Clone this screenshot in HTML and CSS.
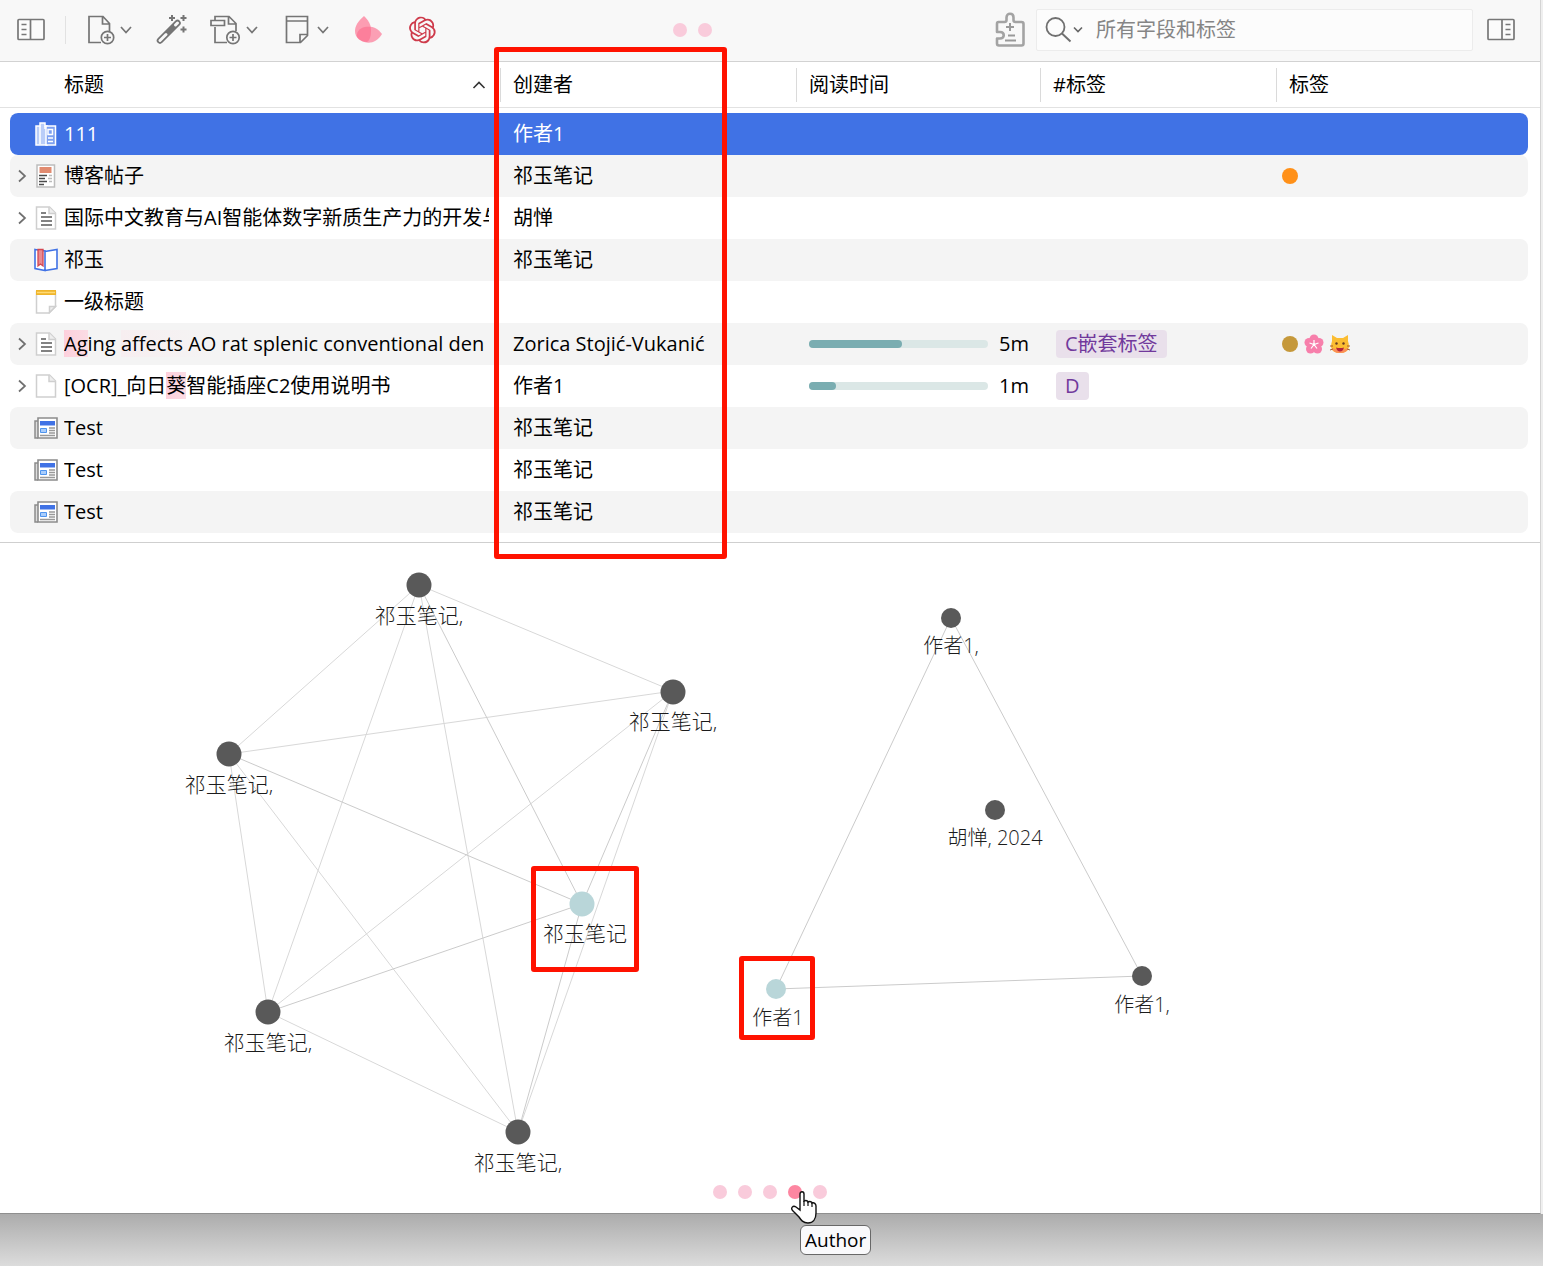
FILE: index.html
```html
<!DOCTYPE html>
<html lang="zh-CN">
<head>
<meta charset="utf-8">
<title>文献库</title>
<link rel="stylesheet" href="styles.css">
</head>
<body>
<svg class="defs" aria-hidden="true">
  <symbol id="chevron" viewBox="0 0 16 30"><path d="M3 12l5 5.500l5-5.500" fill="none" stroke="#757575" stroke-width="1.700"/></symbol>
  <symbol id="twisty" viewBox="0 0 12 16"><path d="M3 2.500l6 5.500l-6 5.500" fill="none" stroke="#707070" stroke-width="1.700"/></symbol>
  <symbol id="article" viewBox="0 0 24 24"><path d="M2.500 1h13l6 6v16h-19z" fill="#fff" stroke="#cfcfcf" stroke-width="1.500"/><path d="M15 1v6.500h6.500" fill="#eee" stroke="#cfcfcf" stroke-width="1.500"/><path d="M7 7h5M7 11h11M7 15h11M7 19h11" stroke="#5a5a5a" stroke-width="1.700"/></symbol>
  <symbol id="file" viewBox="0 0 24 24"><path d="M2.500 1h13l6 6v16h-19z" fill="#fff" stroke="#cfcfcf" stroke-width="1.500"/><path d="M15 1v6.500h6.500" fill="#eee" stroke="#cfcfcf" stroke-width="1.500"/></symbol>
  <symbol id="news" viewBox="0 0 24 24"><path d="M4 5H1v17h3" fill="#ddd" stroke="#8c8c8c" stroke-width="1.500"/><path d="M4 2h19v20H4z" fill="#fff" stroke="#8c8c8c" stroke-width="1.600"/><path d="M6 5h15v4.500H6z" fill="#4072e5"/><path d="M6.500 12.500h6v4h-6z" fill="#a9cdfb" stroke="#4f94ee"/><path d="M15 12h6M15 14.500h6M15 17h6M6 19.500h15" stroke="#999" stroke-width="1.300"/></symbol>
</svg>

<main class="app">
  <header class="toolbar">
    <div class="tools">
      <button class="tool" aria-label="侧栏"><svg width="34" height="30"><rect x="4" y="4.500" width="26" height="20" rx="1" fill="#fbfbfb" stroke="#777" stroke-width="1.700"/><path d="M16.500 4.500v20M7.500 9.500h5M7.500 14.500h5M7.500 19.500h5" stroke="#777" stroke-width="1.700"/></svg></button>
      <span class="separator"></span>
      <button class="tool" aria-label="新建条目"><svg width="34" height="30"><path d="M17 27.500H5V1.500h14l6.500 7V16M18.500 2v7h7" fill="none" stroke="#757575" stroke-width="1.700"/><circle cx="23.500" cy="22.500" r="6.200" fill="#f8f8f8" stroke="#757575" stroke-width="1.700"/><path d="M23.500 19v7M20 22.500h7" stroke="#757575" stroke-width="1.700"/></svg><svg width="16" height="30"><use href="#chevron"/></svg></button>
      <button class="tool" aria-label="通过标识符添加"><svg width="34" height="30"><path d="M5 25.500L22.500 8" stroke="#757575" stroke-width="6.500" stroke-linecap="round"/><path d="M5 25.500L11 19.500M20.500 10l2-2" stroke="#f8f8f8" stroke-width="3" stroke-linecap="round"/><path d="M17 0v6M14 3h6M28.500 0v6M25.500 3h6M28.500 11.500v6M25.500 14.500h6" stroke="#757575" stroke-width="2"/></svg></button>
      <button class="tool" aria-label="添加附件"><svg width="34" height="30"><path d="M5 12v15.500h12M5 5V1.500h14l7 7V16M18.500 2v7h7" fill="none" stroke="#757575" stroke-width="1.700"/><path d="M1 5.500h13.500v5H1z" fill="#f8f8f8" stroke="#757575" stroke-width="1.700"/><circle cx="23" cy="22.500" r="6.200" fill="#f8f8f8" stroke="#757575" stroke-width="1.700"/><path d="M23 19v7M19.500 22.500h7" stroke="#757575" stroke-width="1.700"/></svg><svg width="16" height="30"><use href="#chevron"/></svg></button>
      <button class="tool" aria-label="新建笔记"><svg width="34" height="30"><path d="M5.500 1.500h21v19l-7 7h-14zM5.500 6h21M26.500 19.500h-7.500v8" fill="none" stroke="#757575" stroke-width="1.700"/></svg><svg width="16" height="30"><use href="#chevron"/></svg></button>
      <button class="tool" aria-label="样式"><svg width="34" height="30"><path d="M12 1C6 6 3 11 3 16c0 7 6 11 12 11c3-2 4-6 4-12c0-6-3-10-7-14z" fill="#fc9db2"/><path d="M30 19c-5-7-11-8-17-7c-6 1-9 6-8 10c6 8 19 8 25-3z" fill="#fc6f8f" fill-opacity=".65"/></svg></button>
      <button class="tool" aria-label="GPT"><svg width="34" height="30" viewBox="-1.500 -1.500 30 27"><path fill="#ce3b4b" d="M22.2819 9.8211a5.9847 5.9847 0 0 0-.5157-4.9108 6.0462 6.0462 0 0 0-6.5098-2.9A6.0651 6.0651 0 0 0 4.9807 4.1818a5.9847 5.9847 0 0 0-3.9977 2.9 6.0462 6.0462 0 0 0 .7427 7.0966 5.98 5.98 0 0 0 .511 4.9107 6.051 6.051 0 0 0 6.5146 2.9001A5.9847 5.9847 0 0 0 13.2599 24a6.0557 6.0557 0 0 0 5.7718-4.2058 5.9894 5.9894 0 0 0 3.9977-2.9001 6.0557 6.0557 0 0 0-.7475-7.0729zm-9.022 12.6081a4.4755 4.4755 0 0 1-2.8764-1.0408l.1419-.0804 4.7783-2.7582a.7948.7948 0 0 0 .3927-.6813v-6.7369l2.02 1.1686a.071.071 0 0 1 .038.052v5.5826a4.504 4.504 0 0 1-4.4945 4.4944zm-9.6607-4.1254a4.4708 4.4708 0 0 1-.5346-3.0137l.142.0852 4.783 2.7582a.7712.7712 0 0 0 .7806 0l5.8428-3.3685v2.3324a.0804.0804 0 0 1-.0332.0615L9.74 19.9502a4.4992 4.4992 0 0 1-6.1408-1.6464zM2.3408 7.8956a4.485 4.485 0 0 1 2.3655-1.9728V11.6a.7664.7664 0 0 0 .3879.6765l5.8144 3.3543-2.0201 1.1685a.0757.0757 0 0 1-.071 0l-4.8303-2.7865A4.504 4.504 0 0 1 2.3408 7.872zm16.5963 3.8558L13.1038 8.364 15.1192 7.2a.0757.0757 0 0 1 .071 0l4.8303 2.7913a4.4944 4.4944 0 0 1-.6765 8.1042v-5.6772a.79.79 0 0 0-.407-.667zm2.0107-3.0231l-.142-.0852-4.7735-2.7818a.7759.7759 0 0 0-.7854 0L9.409 9.2297V6.8974a.0662.0662 0 0 1 .0284-.0615l4.8303-2.7866a4.4992 4.4992 0 0 1 6.6802 4.66zM8.3065 12.863l-2.02-1.1638a.0804.0804 0 0 1-.038-.0567V6.0742a4.4992 4.4992 0 0 1 7.3757-3.4537l-.142.0805L8.704 5.459a.7948.7948 0 0 0-.3927.6813zm1.0976-2.3654l2.602-1.4998 2.6069 1.4998v2.9994l-2.5974 1.4997-2.6067-1.4997Z"/></svg></button>
    </div>
    <div class="dots">
      <button class="dot" aria-label="视图 1"></button>
      <button class="dot" aria-label="视图 2"></button>
    </div>
    <div class="search-area">
      <button class="tool" aria-label="插件"><svg width="34" height="36"><path d="M7 10.500h6q2 0 2-2V6c0-5 7-5 7 0v2.500q0 2 2 2h6q2 0 2 2V32q0 2-2 2H7.500q-2 0-2-2v-5h3c5 0 5-6.500 0-6.500h-3v-8q0-2 1.500-2z" transform="translate(.5 -.5)" fill="#f8f8f8" stroke="#a3a3a3" stroke-width="2.600" stroke-linejoin="round"/><path d="M19 11v8M15 15h8M17 23.500h7M14 28.500h11" stroke="#999" stroke-width="2"/></svg></button>
      <label class="search">
        <svg width="40" height="30"><circle cx="10.500" cy="12" r="9" fill="none" stroke="#707070" stroke-width="1.800"/><path d="M17 18.500l8.500 8" stroke="#707070" stroke-width="1.900"/><path d="M29 12.500l4 4l4-4" fill="none" stroke="#666" stroke-width="1.600"/></svg>
        <input type="text" placeholder="所有字段和标签" aria-label="搜索">
      </label>
      <button class="tool" aria-label="条目面板"><svg width="34" height="30"><rect x="4" y="4.500" width="26" height="20" rx="1" fill="#fbfbfb" stroke="#777" stroke-width="1.700"/><path d="M18 4.500v20M21.500 9.500h5M21.500 14.500h5M21.500 19.500h5" stroke="#777" stroke-width="1.700"/></svg></button>
    </div>
  </header>

  <section class="items">
    <table>
      <colgroup><col class="col-title"><col class="col-creator"><col class="col-time"><col class="col-hashtag"><col></colgroup>
      <thead>
        <tr>
          <th><div class="head head-title">标题<svg width="14" height="10"><path d="M1.500 8l5.500-5.500l5.500 5.500" fill="none" stroke="#333" stroke-width="1.600"/></svg></div></th>
          <th><div class="head">创建者</div></th>
          <th><div class="head">阅读时间</div></th>
          <th><div class="head">#标签</div></th>
          <th><div class="head">标签</div></th>
        </tr>
      </thead>
      <tbody>
        <tr class="selected">
          <td><div class="title"><span class="twisty"></span><svg class="icon" viewBox="0 0 24 24"><path d="M2 4h4V1h5v3h2v19H2z" fill="#b9cdf8" stroke="#fff" stroke-width="1.500"/><path d="M6 4v18M11 4v3" stroke="#fff" stroke-width="1.500"/><path d="M12 4h9.500v19H12z" fill="#7da0f0" stroke="#fff" stroke-width="1.500"/><path d="M14 7.500h4.500v5H14zM14 16h5M14 19.500h5" fill="none" stroke="#fff" stroke-width="1.500"/></svg><span class="name">111</span></div></td>
          <td>作者1</td><td></td><td></td><td></td>
        </tr>
        <tr>
          <td><div class="title"><svg class="twisty"><use href="#twisty"/></svg><svg class="icon" viewBox="0 0 24 24"><path d="M3 1h17.500v22H3z" fill="#fff" stroke="#bdbdbd" stroke-width="1.500"/><path d="M5.500 3h12v6h-12z" fill="#e18b70"/><path d="M5 11.500h8M5 14.500h6M5 17.500h8M5 20.500h5" stroke="#4b4b4b" stroke-width="1.500"/><path d="M15 11.500h3M14 14.500h4M15 17.500h3" stroke="#bbb" stroke-width="1.500"/></svg><span class="name">博客帖子</span></div></td>
          <td>祁玉笔记</td><td></td><td></td>
          <td><div class="marks"><span class="mark-dot orange"></span></div></td>
        </tr>
        <tr>
          <td><div class="title"><svg class="twisty"><use href="#twisty"/></svg><svg class="icon"><use href="#article"/></svg><span class="name">国际中文教育与AI智能体数字新质生产力的开发与</span></div></td>
          <td>胡惮</td><td></td><td></td><td></td>
        </tr>
        <tr>
          <td><div class="title"><span class="twisty"></span><svg class="icon" viewBox="0 0 24 24"><path d="M1 1.500l10 1.500v19.500L1 20.500zM11 3.500l12-2v19l-12 2" fill="#fff" stroke="#4072e5" stroke-width="1.600"/><path d="M4 1.500h5V18l-2.500-2l-2.500 2z" fill="#e88b93" stroke="#d4454f" stroke-width="1.300"/></svg><span class="name">祁玉</span></div></td>
          <td>祁玉笔记</td><td></td><td></td><td></td>
        </tr>
        <tr>
          <td><div class="title"><span class="twisty"></span><svg class="icon" viewBox="0 0 24 24"><path d="M2.500 2h19v14.500l-6.500 6.500H2.500z" fill="#fff" stroke="#cfcfcf" stroke-width="1.500"/><path d="M21.500 16.500h-6v6z" fill="#eee" stroke="#cfcfcf" stroke-width="1.500"/><path d="M2 0h20v5H2z" fill="#efb52c"/><path d="M3 2.500h18" stroke="#ffda74" stroke-width="1.500"/></svg><span class="name">一级标题</span></div></td>
          <td></td><td></td><td></td><td></td>
        </tr>
        <tr>
          <td><div class="title"><svg class="twisty"><use href="#twisty"/></svg><svg class="icon"><use href="#article"/></svg><span class="name"><span class="pink">Ag</span>ing <span class="faint">affects AO</span> rat splenic conventional den</span></div></td>
          <td>Zorica Stojić-Vukanić</td>
          <td><div class="reading"><div class="bar"><div class="fill" style="width:52%"></div></div><span>5m</span></div></td>
          <td><span class="tag">C嵌套标签</span></td>
          <td><div class="marks"><span class="mark-dot ochre"></span>
            <svg width="20" height="20"><g fill="#f77fab"><circle cx="10" cy="5" r="4.500"/><circle cx="15" cy="8.500" r="4.500"/><circle cx="13.500" cy="15" r="4.500"/><circle cx="6.500" cy="15" r="4.500"/><circle cx="5" cy="8.500" r="4.500"/><circle cx="10" cy="11" r="5"/></g><path d="M10 10.500V6M10 10.500l4.500-1.500M10 10.500l3 4M10 10.500l-3 4M10 10.500L5.500 9" stroke="#fff" stroke-width="1.200"/><circle cx="10" cy="10.500" r="1.300" fill="#fff"/></svg>
            <svg width="20" height="20"><path d="M2 1l5 3h6l5-3v6q1 3 1 6q-1 6-9 6t-9-6q0-3 1-6z" fill="#fbbd32"/><path d="M2 14q8 3 16 0q-1 5-8 5t-8-5z" fill="#fb8d59"/><circle cx="6.500" cy="9.500" r="1.200" fill="#673b25"/><circle cx="13.500" cy="9.500" r="1.200" fill="#673b25"/><path d="M6 13.500q4 1 8 0q-1 4-4 4t-4-4z" fill="#b3243b"/><path d="M0 12h3M0 16l3-1M20 12h-3M20 16l-3-1" stroke="#a75d37"/></svg></div></td>
        </tr>
        <tr>
          <td><div class="title"><svg class="twisty"><use href="#twisty"/></svg><svg class="icon"><use href="#file"/></svg><span class="name">[OCR]_向日<span class="pink">葵</span>智能插座C2使用说明书</span></div></td>
          <td>作者1</td>
          <td><div class="reading"><div class="bar"><div class="fill" style="width:15%"></div></div><span>1m</span></div></td>
          <td><span class="tag">D</span></td><td></td>
        </tr>
        <tr><td><div class="title"><span class="twisty"></span><svg class="icon"><use href="#news"/></svg><span class="name">Test</span></div></td><td>祁玉笔记</td><td></td><td></td><td></td></tr>
        <tr><td><div class="title"><span class="twisty"></span><svg class="icon"><use href="#news"/></svg><span class="name">Test</span></div></td><td>祁玉笔记</td><td></td><td></td><td></td></tr>
        <tr><td><div class="title"><span class="twisty"></span><svg class="icon"><use href="#news"/></svg><span class="name">Test</span></div></td><td>祁玉笔记</td><td></td><td></td><td></td></tr>
      </tbody>
    </table>
    <div class="callout callout-column"></div>
  </section>

  <section class="graph">
    <svg class="network" role="img" aria-label="作者关系图">
      <g class="edges">
        <path d="M419 42L673 148M419 42L229 211M419 42L268 469M419 42L518 589M673 148L229 211M673 148L268 469M673 148L518 589M229 211L268 469M229 211L518 589M268 469L518 589"/>
        <path class="near" d="M419 42L582 361M673 148L582 361M229 211L582 361M268 469L582 361M518 589L582 361"/>
        <path class="near" d="M951 75L776 446M951 75L1142 433M776 446L1142 433"/>
      </g>
      <g class="nodes">
        <circle cx="419" cy="42" r="12.500"/><circle cx="673" cy="149" r="12.500"/><circle cx="229" cy="211" r="12.500"/>
        <circle cx="268" cy="469" r="12.500"/><circle cx="518" cy="589" r="12.500"/><circle class="current" cx="582" cy="361" r="12.500"/>
        <circle cx="951" cy="75" r="10"/><circle cx="995" cy="267" r="10"/><circle cx="1142" cy="433" r="10"/><circle class="current" cx="776" cy="446" r="10"/>
      </g>
      <g class="labels large">
        <text x="419" y="80">祁玉笔记,</text><text x="673" y="186">祁玉笔记,</text><text x="229" y="249">祁玉笔记,</text>
        <text x="268" y="507">祁玉笔记,</text><text x="518" y="627">祁玉笔记,</text><text x="585" y="398">祁玉笔记</text>
      </g>
      <g class="labels">
        <text x="951" y="110">作者1,</text><text x="995" y="302">胡惮, 2024</text><text x="1142" y="469">作者1,</text><text x="778" y="482">作者1</text>
      </g>
    </svg>
    <div class="callout callout-first"></div>
    <div class="callout callout-second"></div>
    <div class="dots pager">
      <button class="dot" aria-label="1"></button><button class="dot" aria-label="2"></button><button class="dot" aria-label="3"></button>
      <button class="dot active" aria-label="Author" aria-describedby="tip">
        <svg class="pointer" width="28" height="34"><path d="M10 3c0-3 4-3 4 0v7c2-1 4 0 4 1c2-1 4 0 4 1c2-1 4 1 4 3v7c0 6-3 10-8 10c-5 0-7-3-9-6l-6-6c-3-3 0-6 3-4l4 3z" fill="#fff" stroke="#111" stroke-width="1.400"/><path d="M14 10v5M18 11v4M22 12v4" stroke="#111" stroke-width="1.200"/></svg>
        <span class="tooltip" id="tip" role="tooltip">Author</span>
      </button>
      <button class="dot" aria-label="5"></button>
    </div>
  </section>
</main>
</body>
</html>
```
FILE: styles.css
```css
* { box-sizing: border-box; }

body {
  margin: 0;
  min-height: 100vh;
  display: flex;
  flex-direction: column;
  padding: 0 2px 52px 0;
  background: linear-gradient(#acacac, #dcdcdc) bottom / 100% 52px no-repeat #efefef;
  font-family: "Open Sans", "Noto Sans CJK SC", sans-serif;
  font-size: 20px;
  line-height: 28px;
  color: #000;
}

button { border: 0; padding: 0; background: none; font: inherit; color: inherit; }
svg { display: block; flex: none; }
.defs { position: absolute; width: 0; height: 0; }

.app {
  flex: 1;
  display: flex;
  flex-direction: column;
  background: #fff;
  border-right: 1px solid #d4d4d4;
  border-bottom: 1px solid #8f8f8f;
}

/* Toolbar */
.toolbar {
  display: flex;
  align-items: center;
  height: 62px;
  padding-bottom: 1px;
  background: #f8f8f8;
  border-bottom: 1px solid #d2d2d2;
}
.tools { flex: 1; display: flex; align-items: center; gap: 21px; padding-left: 14px; }
.tool { display: flex; align-items: center; }
.separator { width: 1px; height: 28px; margin: 0 -3px 0 -4px; background: #e2e2e2; }
.dots { display: flex; gap: 11px; }
.dot { width: 14px; height: 14px; border-radius: 50%; background: #f9cbdb; }
.dot.active { position: relative; background: #fd86a1; }
.search-area {
  flex: 0 0 828px;
  display: flex;
  align-items: center;
  justify-content: flex-end;
  gap: 11px;
  padding-right: 22px;
}
.search {
  display: flex;
  align-items: center;
  gap: 11px;
  width: 437px;
  height: 42px;
  padding-left: 8px;
  background: #fcfcfc;
  border: 1px solid #ececec;
  border-radius: 2px;
}
.search input {
  flex: 1;
  min-width: 0;
  border: 0;
  padding: 0;
  background: none;
  font: inherit;
}
.search input::placeholder { color: #858585; opacity: 1; }

/* Item list */
.items { position: relative; padding-bottom: 9px; border-bottom: 1px solid #cfcfcf; }
table { width: 100%; table-layout: fixed; border-collapse: separate; border-spacing: 0; }
.col-title { width: 500px; }
.col-creator { width: 296px; }
.col-time { width: 244px; }
.col-hashtag { width: 236px; }

th { height: 46px; padding: 0; border-bottom: 1px solid #e2e2e2; font-weight: 400; text-align: left; }
.head { height: 34px; padding-left: 12px; border-left: 1px solid #dadada; line-height: 34px; }
.head-title {
  display: flex;
  align-items: center;
  justify-content: space-between;
  padding: 0 14px 0 64px;
  border-left: 0;
}

tbody::before { content: ""; display: block; height: 5px; }
td { height: 42px; padding: 0 0 0 13px; white-space: nowrap; }
td:first-child {
  padding: 0 11px 0 0;
  border-left: 10px solid transparent;
  border-radius: 18px 0 0 18px / 8px;
  background-clip: padding-box;
}
td:nth-child(4) { padding-left: 16px; }
td:last-child {
  padding-left: 6px;
  border-right: 12px solid transparent;
  border-radius: 0 20px 20px 0 / 8px;
  background-clip: padding-box;
}
tbody tr:nth-child(even) td { background-color: #f4f4f4; }
tbody tr.selected td { background-color: #4072e5; color: #fff; }

.title { display: flex; align-items: center; }
.twisty { flex: none; width: 12px; height: 16px; margin: 0 6px; }
.icon { width: 24px; height: 24px; margin-right: 6px; }
.name { overflow: hidden; }
.pink { background: linear-gradient(90deg, #fdd0dc, #fbdce4); }
.faint { background: linear-gradient(90deg, #f7eef0, #f4f4f4); }

.reading { display: flex; align-items: center; gap: 11px; }
.bar { width: 179px; height: 8px; border-radius: 4px; background: #dbe7e6; }
.fill { height: 8px; border-radius: 4px; background: #7aadb1; }
.tag {
  display: inline-block;
  padding: 0 9px;
  border-radius: 4px;
  background: #e9e0eb;
  color: #71399c;
}
.marks { display: flex; align-items: center; gap: 6px; }
.mark-dot { width: 16px; height: 16px; border-radius: 50%; }
.orange { background: #ff9018; }
.ochre { background: #c5983a; }

/* Graph canvas */
.graph { position: relative; flex: 1; min-height: 670px; }
.network { position: absolute; width: 100%; height: 100%; }
.edges { fill: none; stroke: #d8d8d8; }
.edges .near { stroke: #cbcbcb; }
.nodes { fill: #595959; }
.nodes .current { fill: #b9d6d9; }
.labels { fill: #1c1c1c; text-anchor: middle; font-size: 20px; font-weight: 300; }
.labels.large { font-size: 21px; }

.pager { position: absolute; bottom: 14px; left: 50%; transform: translateX(-50%); }
.pointer { position: absolute; left: 2px; top: 6px; }
.tooltip {
  position: absolute;
  left: 12px;
  top: 40px;
  padding: 0 4px;
  border: 1px solid #686868;
  border-radius: 6px;
  background: #f9f9fb;
  font-size: 19px;
}

/* Red highlight frames */
.callout { position: absolute; border: 5px solid #ff1200; border-radius: 3px; pointer-events: none; }
.callout-column { left: 494px; top: -15px; width: 233px; bottom: -17px; z-index: 1; }
.callout-first { left: 531px; top: 323px; width: 108px; height: 106px; }
.callout-second { left: 739px; top: 413px; width: 76px; height: 84px; }
```
